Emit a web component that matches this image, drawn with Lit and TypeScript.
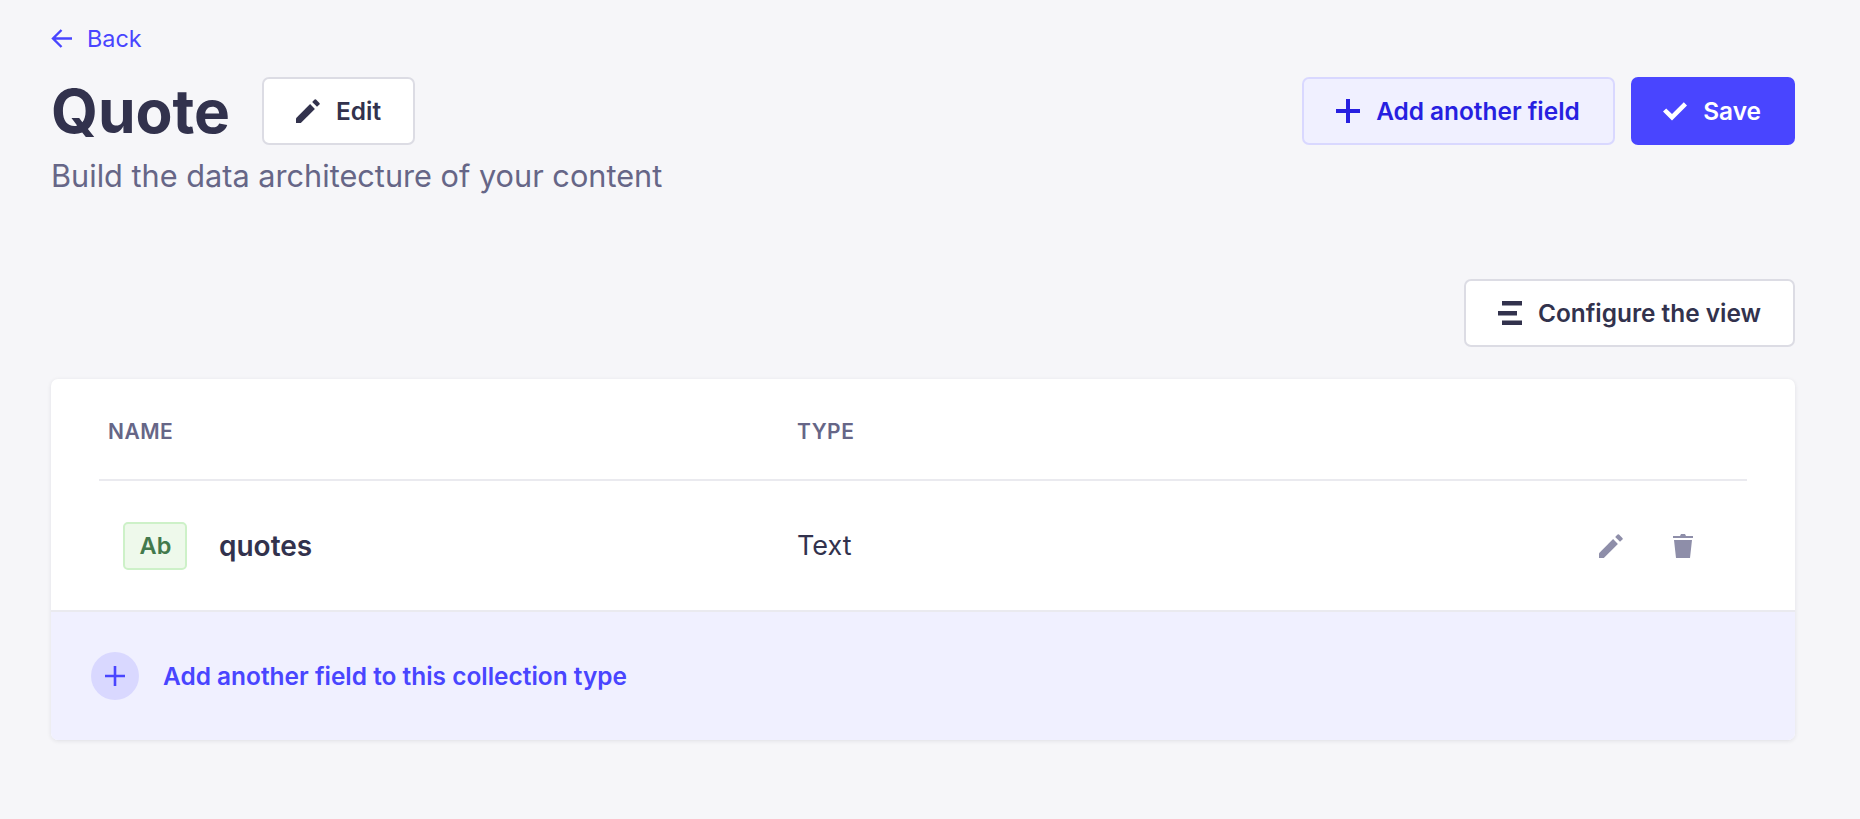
import { LitElement, html, css, svg } from 'lit';
import { customElement } from 'lit/decorators.js';

const pencil = svg`<path d="M0 19.2V24h4.8L18.9 9.9 14.1 5.1 0 19.2z"/><path d="M16.2 3l4.8 4.8 2.4-2.4a1 1 0 000-1.4L20 .6a1 1 0 00-1.4 0L16.2 3z"/>`;

@customElement('app-root')
export class AppRoot extends LitElement {
  static override styles = css`
    :host {
      display: block;
      min-height: 819px;
      background: #f6f6f9;
      font-family: Inter, 'Liberation Sans', sans-serif;
      color: #32324d;
    }

    .page {
      padding: 24px 65px 0 51px;
    }

    .back {
      display: flex;
      align-items: center;
      gap: 15px;
      height: 28px;
      color: #4945ff;
      font-size: 23.4px;
    }

    .back svg {
      width: 21px;
      height: 19px;
      fill: none;
      stroke: #4945ff;
      stroke-width: 2.4;
    }

    .head {
      display: flex;
      justify-content: space-between;
      align-items: flex-start;
      margin-top: 25px;
    }

    .title-row {
      display: flex;
      align-items: center;
      gap: 32px;
    }

    h1 {
      margin: 0;
      font-size: 60.4px;
      line-height: 68px;
      font-weight: 700;
    }

    .actions {
      display: flex;
      gap: 16px;
    }

    .btn {
      box-sizing: border-box;
      display: inline-flex;
      align-items: center;
      gap: 16px;
      height: 68px;
      padding: 0 32px;
      border: 2px solid #dcdce4;
      border-radius: 7px;
      background: #fff;
      font-size: 24.4px;
      font-weight: 600;
      color: #32324d;
    }

    .btn svg {
      width: 24px;
      height: 24px;
      fill: currentColor;
      flex: none;
    }

    .btn.light {
      padding-right: 33.5px;
      background: #f0f0ff;
      border-color: #d9d8ff;
      color: #271fe0;
    }

    .btn.primary {
      padding-left: 30px;
      background: #4945ff;
      border-color: #4945ff;
      color: #fff;
    }

    .subtitle {
      margin: 12px 0 0;
      font-size: 30.7px;
      line-height: 38px;
      color: #666687;
    }

    .toolbar {
      display: flex;
      justify-content: flex-end;
      margin-top: 84px;
    }

    .card {
      margin-top: 32px;
      height: 361px;
      display: flex;
      flex-direction: column;
      background: #fff;
      border-radius: 7px;
      overflow: hidden;
      box-shadow: 0 1px 4px rgba(33, 33, 52, 0.1);
    }

    .table {
      height: 231px;
      flex: none;
      padding: 0 48px;
    }

    .columns {
      box-sizing: border-box;
      display: grid;
      grid-template-columns: 698px 1fr;
      align-items: center;
      height: 102px;
      padding-top: 4px;
      border-bottom: 2px solid #eaeaef;
      font-size: 21px;
      font-weight: 600;
      letter-spacing: 0.5px;
      color: #666687;
    }

    .columns span:first-child {
      padding-left: 9px;
    }

    .row {
      display: grid;
      grid-template-columns: 698px 1fr auto;
      align-items: center;
      height: 129px;
      font-size: 27px;
    }

    .name {
      display: flex;
      align-items: center;
      gap: 32px;
      padding-left: 24px;
      font-size: 28px;
      font-weight: 600;
    }

    .badge {
      box-sizing: border-box;
      width: 64px;
      height: 48px;
      display: flex;
      align-items: center;
      justify-content: center;
      padding-left: 1px;
      background: #eef9eb;
      border: 2px solid #cdf1c8;
      border-radius: 5px;
      color: #437a4c;
      font-size: 23.5px;
      font-weight: 600;
    }

    .row-actions {
      display: flex;
      gap: 50px;
      padding-right: 54px;
    }

    .row-actions svg {
      height: 24px;
      fill: #8e8ea9;
      display: block;
    }

    .add-row {
      flex: 1;
      display: flex;
      align-items: center;
      gap: 24px;
      padding: 0 40px;
      background: #f0f0ff;
      border-top: 2px solid #eaeaef;
      color: #4945ff;
      font-size: 24.45px;
      font-weight: 600;
    }

    .circle {
      width: 48px;
      height: 48px;
      border-radius: 50%;
      background: #d9d8ff;
      display: flex;
      align-items: center;
      justify-content: center;
      flex: none;
    }

    .circle svg {
      width: 20px;
      height: 20px;
      fill: #4945ff;
    }
  `;

  override render() {
    return html`
      <div class="page">
        <div class="back">
          <svg viewBox="0 0 21 19"><path d="M21 9.5H2M10.5 1L2 9.5l8.5 8.5"/></svg>
          Back
        </div>
        <div class="head">
          <div class="title-row">
            <h1>Quote</h1>
            <div class="btn"><svg viewBox="0 0 24 24">${pencil}</svg>Edit</div>
          </div>
          <div class="actions">
            <div class="btn light">
              <svg viewBox="0 0 24 24"><path d="M10 0h4v10h10v4H14v10h-4V14H0v-4h10z"/></svg>
              Add another field
            </div>
            <div class="btn primary">
              <svg viewBox="0 0 24 24"><path d="M9 21.5L0 12.6l3.2-3.2L9 15.1 20.8 3.3 24 6.5z"/></svg>
              Save
            </div>
          </div>
        </div>
        <p class="subtitle">Build the data architecture of your content</p>
        <div class="toolbar">
          <div class="btn">
            <svg viewBox="0 0 24 24"><path d="M4 0h20v4.5H4zM0 10h19v4.5H0zM4 19.5h20V24H4z"/></svg>
            Configure the view
          </div>
        </div>
        <div class="card">
          <div class="table">
            <div class="columns"><span>NAME</span><span>TYPE</span></div>
            <div class="row">
              <div class="name"><span class="badge">Ab</span>quotes</div>
              <div>Text</div>
              <div class="row-actions">
                <svg viewBox="0 0 24 24" width="24">${pencil}</svg>
                <svg viewBox="0 0 20 24" width="20"><path d="M7 2l1-2h4l1 2h7v2H0V2zM1 6h18l-2 18H3z"/></svg>
              </div>
            </div>
          </div>
          <div class="add-row">
            <span class="circle"><svg viewBox="0 0 20 20"><path d="M8.7 0h2.6v8.7H20v2.6h-8.7V20H8.7v-8.7H0V8.7h8.7z"/></svg></span>
            Add another field to this collection type
          </div>
        </div>
      </div>
    `;
  }
}
